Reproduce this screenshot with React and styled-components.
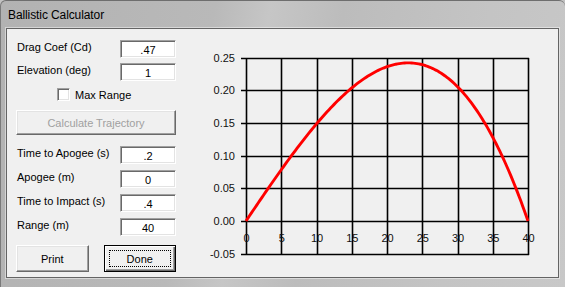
import React from 'react';
import styled, { createGlobalStyle } from 'styled-components';

const Global = createGlobalStyle`
  html, body { margin: 0; padding: 0; background: #c2c2c2; }
  body { width: 565px; height: 287px; overflow: hidden; font-family: "Liberation Sans", Arial, sans-serif; }
`;

const Window = styled.div`
  box-sizing: border-box;
  width: 565px;
  height: 287px;
  border-top: 1px solid #6e6e6e;
  border-left: 1px solid #7a7a7a;
  border-radius: 6px 6px 0 0;
  background: linear-gradient(100deg, #b2b2b2 0%, #b9b9b9 35%, #c6c6c6 44%, #bcbcbc 56%, #c4c4c4 80%, #c8c8c8 100%);
  padding: 0 5px 0 5px;
  display: flex;
  flex-direction: column;
`;

const TitleBar = styled.div`
  height: 27px;
  display: flex;
  align-items: center;
  padding-left: 2px;
  font-family: "Liberation Sans", Arial, sans-serif;
  font-size: 12px;
  color: #000;
  letter-spacing: -0.1px;
`;

const Client = styled.div`
  box-sizing: border-box;
  width: 553px;
  height: 250px;
  background: #f0f0f0;
  border: 1px solid #646464;
  box-shadow: 0 0 0 1px rgba(255, 255, 255, 0.45);
  display: flex;
  flex-direction: row;
`;

const LeftPanel = styled.div`
  width: 160px;
  padding: 11px 0 0 9px;
  display: flex;
  flex-direction: column;
`;

const Row = styled.div`
  display: flex;
  align-items: center;
  height: 18px;
  margin-top: ${p => p.$mt || 0}px;
`;

const Label = styled.div`
  width: 104px;
  font-size: 11px;
  color: #000;
  padding-left: 1px;
  box-sizing: border-box;
  margin-top: -4px;
  white-space: nowrap;
`;

const Field = styled.div`
  box-sizing: border-box;
  width: 56px;
  height: 18px;
  background: #fff;
  border: 1px solid;
  border-color: #a0a0a0 #ffffff #ffffff #a0a0a0;
  box-shadow: inset 1px 1px 0 #696969, inset -1px -1px 0 #e3e3e3;
  text-align: center;
  font-size: 11px;
  line-height: 18px;
  color: #000;
`;

const CheckRow = styled.label`
  display: flex;
  align-items: center;
  height: 13px;
  margin-top: ${p => p.$mt || 0}px;
  padding-left: 41px;
  gap: 5px;
  font-size: 11px;
  color: #000;
`;

const CheckBox = styled.span`
  box-sizing: border-box;
  width: 13px;
  height: 13px;
  background: #fff;
  border: 1px solid;
  border-color: #a0a0a0 #ffffff #ffffff #a0a0a0;
  box-shadow: inset 1px 1px 0 #696969, inset -1px -1px 0 #e3e3e3;
`;

const Button = styled.button`
  box-sizing: border-box;
  width: ${p => p.$w}px;
  height: ${p => p.$h}px;
  margin-top: ${p => p.$mt || 0}px;
  padding: 0;
  background: #f0f0f0;
  border: 1px solid;
  border-color: #ffffff #696969 #696969 #ffffff;
  box-shadow: inset -1px -1px 0 #a0a0a0, inset 1px 1px 0 #e3e3e3;
  font-family: "Liberation Sans", Arial, sans-serif;
  font-size: 11px;
  color: ${p => (p.disabled ? '#a0a0a0' : '#000')};
  position: relative;
  cursor: default;
`;

const DefaultButton = styled(Button)`
  border: 1px solid #000;
  box-shadow: inset 1px 1px 0 #ffffff, inset -1px -1px 0 #696969, inset -2px -2px 0 #a0a0a0;
`;

const Focus = styled.span`
  position: absolute;
  left: 4px;
  top: 4px;
  right: 4px;
  bottom: 4px;
  border: 1px dotted #000;
  display: flex;
  align-items: center;
  justify-content: center;
`;

const ButtonRow = styled.div`
  display: flex;
  gap: 15px;
  margin-top: ${p => p.$mt || 0}px;
`;

const ChartBox = styled.div`
  margin-left: 12px;
  width: 362px;
  height: 248px;
`;

/* Chart geometry (svg coords) */
const X0 = 58, XS = 7.05; // px per unit x
const Y0 = 192, YS = 653.3; // px per unit y
const px = x => X0 + x * XS;
const py = y => Y0 - y * YS;

// trajectory with drag: asymmetric arc, apogee ~0.242 near x=23, impact at 40
const A = 0.0004006, B = 0.0237;
const traj = x => A * x * (40 - x) * (1 + B * x);

function curvePath() {
  const n = 160;
  let d = '';
  for (let i = 0; i <= n; i++) {
    const x = (40 * i) / n;
    d += `${i === 0 ? 'M' : 'L'}${px(x).toFixed(2)},${py(traj(x)).toFixed(2)} `;
  }
  return d;
}

function Chart() {
  const xTicks = [0, 5, 10, 15, 20, 25, 30, 35, 40];
  const yTicks = [0.25, 0.2, 0.15, 0.1, 0.05, 0, -0.05];
  const top = py(0.25);
  const bottom = py(-0.05);
  const right = px(40);
  return (
    <svg width="362" height="248" viewBox="0 0 362 248">
      {yTicks.map(v => (
        <line key={'h' + v} x1={X0 - 5} x2={right + 1} y1={Math.round(py(v)) + 0.5} y2={Math.round(py(v)) + 0.5}
          stroke="#000" strokeWidth="1.6" />
      ))}
      {xTicks.map(v => (
        <line key={'v' + v} x1={Math.round(px(v)) + 0.5} x2={Math.round(px(v)) + 0.5} y1={Math.round(top)} y2={Math.round(bottom) + 1}
          stroke="#000" strokeWidth="1.6" />
      ))}
      {yTicks.map(v => (
        <text key={'yl' + v} x={X0 - 11} y={py(v) + 4} textAnchor="end" fontSize="11"
          fontFamily='"Liberation Sans", Arial, sans-serif' fill="#111">{v.toFixed(2)}</text>
      ))}
      {xTicks.map(v => (
        <text key={'xl' + v} x={px(v) + 0.5} y={py(0) + 21} textAnchor="middle" fontSize="11"
          fontFamily='"Liberation Sans", Arial, sans-serif' fill="#111">{v}</text>
      ))}
      <path d={curvePath()} fill="none" stroke="#ff0000" strokeWidth="2.9" strokeLinejoin="round" />
    </svg>
  );
}

export default function App() {
  return (
    <>
      <Global />
      <Window>
        <TitleBar>Ballistic Calculator</TitleBar>
        <Client>
          <LeftPanel>
            <Row>
              <Label>Drag Coef (Cd)</Label>
              <Field>.47</Field>
            </Row>
            <Row $mt={5}>
              <Label>Elevation (deg)</Label>
              <Field>1</Field>
            </Row>
            <CheckRow $mt={7}>
              <CheckBox />
              <span>Max Range</span>
            </CheckRow>
            <Button $w={160} $h={25} $mt={9} disabled>Calculate Trajectory</Button>
            <Row $mt={11}>
              <Label>Time to Apogee (s)</Label>
              <Field>.2</Field>
            </Row>
            <Row $mt={6}>
              <Label>Apogee (m)</Label>
              <Field>0</Field>
            </Row>
            <Row $mt={6}>
              <Label>Time to Impact (s)</Label>
              <Field>.4</Field>
            </Row>
            <Row $mt={6}>
              <Label>Range (m)</Label>
              <Field>40</Field>
            </Row>
            <ButtonRow $mt={9}>
              <Button $w={73} $h={27}>Print</Button>
              <DefaultButton $w={73} $h={27}><Focus>Done</Focus></DefaultButton>
            </ButtonRow>
          </LeftPanel>
          <ChartBox>
            <Chart />
          </ChartBox>
        </Client>
      </Window>
    </>
  );
}
